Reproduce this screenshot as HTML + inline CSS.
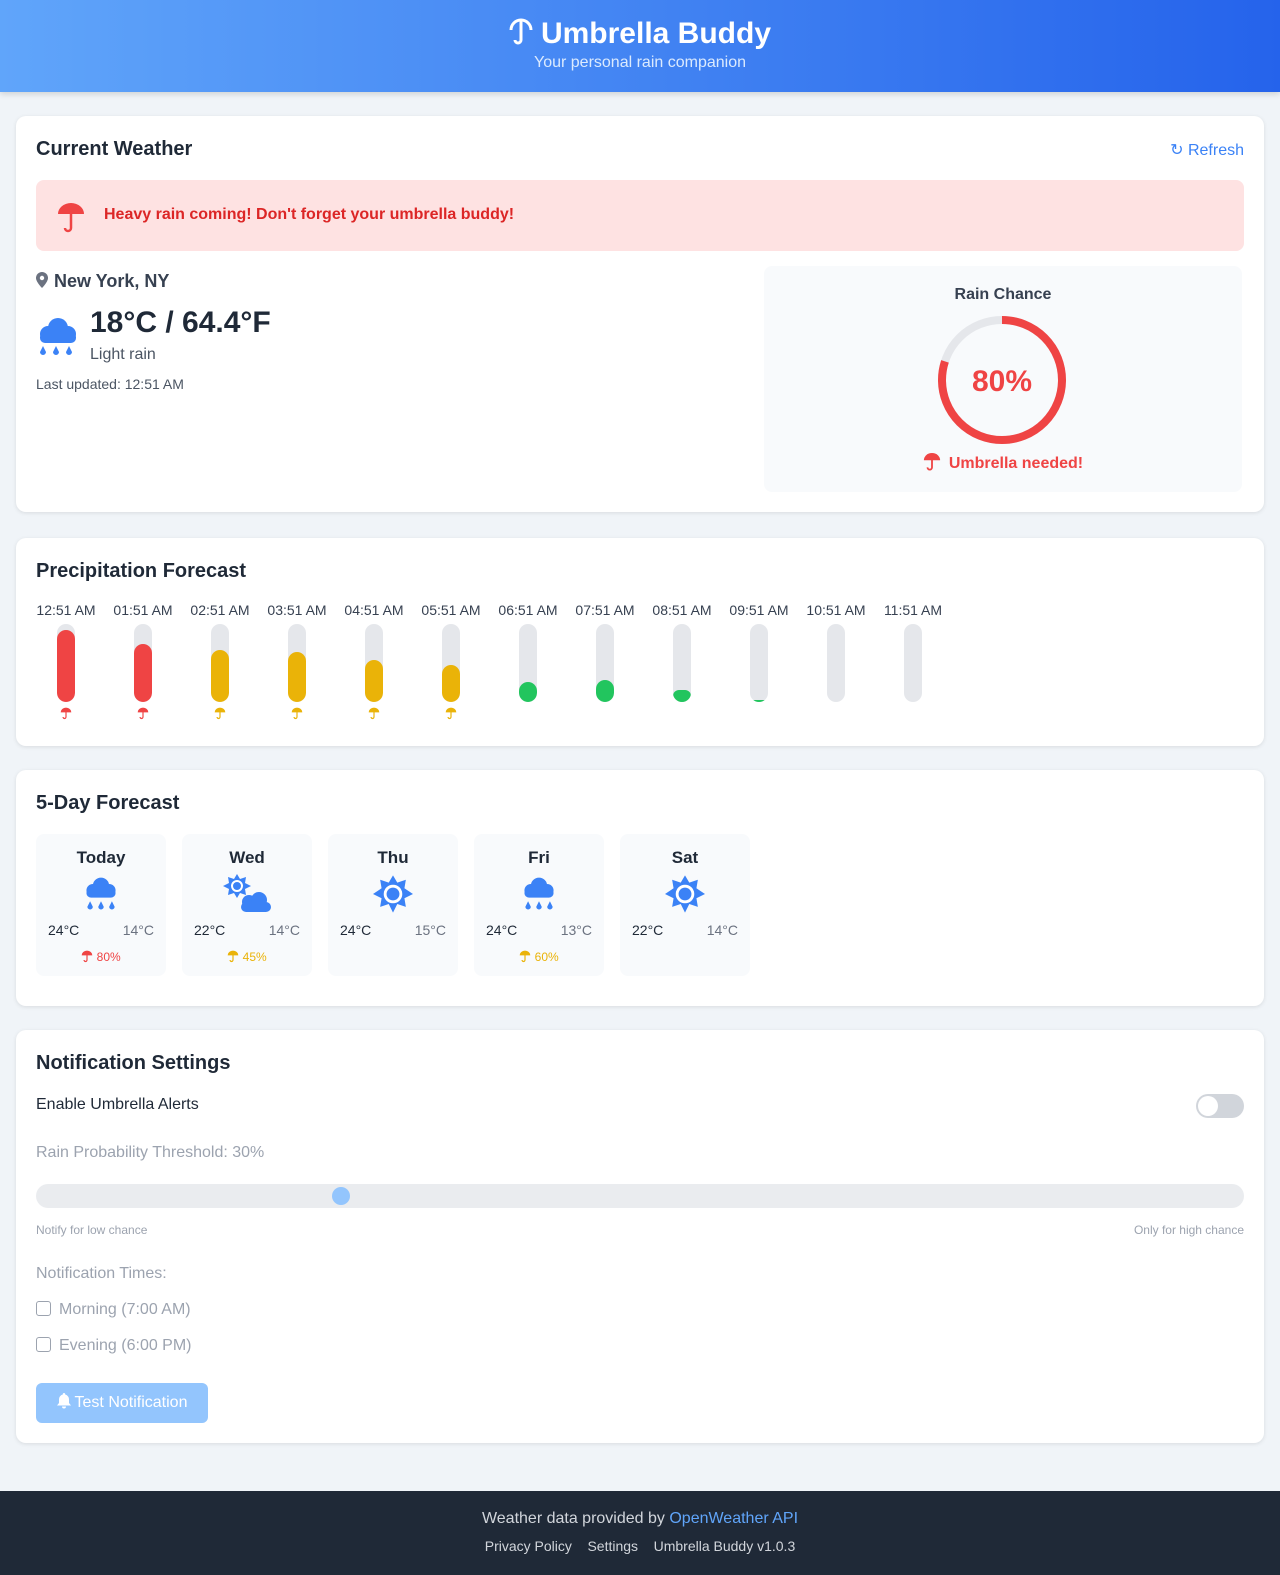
<!DOCTYPE html>
<html><head><meta charset="utf-8"><style>
*{box-sizing:border-box;margin:0;padding:0}
body{width:1280px;height:1575px;background:#f0f4f8;font-family:"Liberation Sans",sans-serif;color:#1f2937;position:relative}
header{height:92px;background:linear-gradient(90deg,#60a5fa,#2563eb);color:#fff;text-align:center;box-shadow:0 2px 6px rgba(0,0,0,.15)}
header h1{font-size:30px;font-weight:700;padding-top:16px;line-height:36px}
header p{font-size:16px;color:#dbeafe;margin-top:2px}
.card{position:absolute;left:16px;width:1248px;background:#fff;border-radius:10px;box-shadow:0 1px 4px rgba(0,0,0,.1);padding:20px}
h2{font-size:20px;font-weight:600;color:#1f2937}
.abs{position:absolute}
.fc{position:absolute;top:64px;width:130px;height:142px;background:#f8fafc;border-radius:8px;text-align:center}
.fc b{display:block;font-size:17px;font-weight:600;margin-top:14px;color:#1f2937}
.fc .t{position:absolute;top:88px;left:12px;right:12px;font-size:14px;display:flex;justify-content:space-between}
.fc .t span:last-child{color:#6b7280}
.fc .p{position:absolute;top:116px;width:100%;font-size:12px}
.col{position:absolute;top:64px;width:76px;text-align:center;font-size:14px;color:#374151}
.bar{position:relative;width:18px;height:78px;background:#e5e7eb;border-radius:9px;margin:6px auto 0;overflow:hidden}
.bar i{position:absolute;bottom:0;left:0;width:18px;border-radius:9px}
.u{display:block;margin:5px auto 0}
footer{position:absolute;top:1491px;left:0;width:1280px;height:84px;background:#1f2937;color:#d1d5db;text-align:center}
</style></head><body>
<svg width="0" height="0" style="position:absolute"><defs><symbol id="umb" viewBox="0 0 20 22"><path d="M1 9 A9 8 0 0 1 19 9 Z" fill="currentColor"/><path d="M10 3 V17 a2.5 2.5 0 0 1 -5 0" fill="none" stroke="currentColor" stroke-width="2"/></symbol></defs></svg>
<header><h1><svg width="24" height="28" viewBox="0 0 24 28" style="vertical-align:-3px;margin-right:8px"><path d="M2 12 A10 10 0 0 1 22 12" fill="none" stroke="#fff" stroke-width="3"/><path d="M12 2 V22 a3 3 0 0 1 -6 0" fill="none" stroke="#fff" stroke-width="3"/></svg>Umbrella Buddy</h1><p>Your personal rain companion</p></header>

<div class="card" style="top:116px;height:396px">
<h2 style="margin-top:2px">Current Weather</h2>
<div class="abs" style="right:20px;top:24px;color:#3b82f6;font-size:16px">&#x21bb; Refresh</div>
<div class="abs" style="left:20px;top:64px;width:1208px;height:71px;background:#fee2e2;border-radius:8px;color:#dc2626;font-size:16px;font-weight:600;padding:26px 0 0 68px">
<svg class="abs" style="left:20px;top:22px" width="30" height="32" viewBox="0 0 30 32"><path d="M2 12 A13 11 0 0 1 28 12 Z" fill="#ef4444"/><path d="M15 4 V26 a3 3 0 0 1 -6 0" fill="none" stroke="#ef4444" stroke-width="2.5"/></svg>
Heavy rain coming! Don't forget your umbrella buddy!</div>
<div class="abs" style="left:20px;top:155px;font-size:18px;color:#374151;font-weight:600"><svg width="12" height="16" viewBox="0 0 12 16" style="vertical-align:-1px;margin-right:6px"><path d="M6 0 A6 6 0 0 1 12 6 C12 10 6 16 6 16 C6 16 0 10 0 6 A6 6 0 0 1 6 0Z" fill="#6b7280"/><circle cx="6" cy="6" r="2.2" fill="#fff"/></svg>New York, NY</div>
<svg class="abs" style="left:20px;top:198px" width="42" height="44" viewBox="0 0 42 44"><circle cx="12" cy="20" r="8" fill="#3b82f6"/><circle cx="22" cy="14" r="10" fill="#3b82f6"/><circle cx="32" cy="20" r="8" fill="#3b82f6"/><rect x="4" y="18" width="36" height="11" rx="5" fill="#3b82f6"/><path d="M7 32 l-3 6 a3 3 0 0 0 6 0z M20 32 l-3 6 a3 3 0 0 0 6 0z M33 32 l-3 6 a3 3 0 0 0 6 0z" fill="#3b82f6"/></svg>
<div class="abs" style="left:74px;top:190px;font-size:30px;font-weight:700;color:#1f2937">18°C / 64.4°F</div>
<div class="abs" style="left:74px;top:230px;font-size:16px;color:#4b5563">Light rain</div>
<div class="abs" style="left:20px;top:260px;font-size:14px;color:#4b5563">Last updated: 12:51 AM</div>
<div class="abs" style="left:748px;top:150px;width:478px;height:226px;background:#f8fafc;border-radius:8px;text-align:center">
<div style="margin-top:20px;font-size:16px;color:#374151;font-weight:600">Rain Chance</div>
<svg class="abs" style="left:172px;top:48px" width="132" height="132" viewBox="0 0 132 132"><circle cx="66" cy="66" r="60" fill="none" stroke="#e5e7eb" stroke-width="8"/><circle cx="66" cy="66" r="60" fill="none" stroke="#ef4444" stroke-width="8" stroke-dasharray="301.6 377" transform="rotate(-90 66 66)"/><text x="66" y="77" text-anchor="middle" font-family="Liberation Sans" font-weight="700" font-size="30" fill="#ef4444">80%</text></svg>
<div class="abs" style="top:186px;width:100%;color:#ef4444;font-size:16px;font-weight:600"><svg width="18" height="20" style="vertical-align:-4px;margin-right:8px;color:#ef4444"><use href="#umb"/></svg>Umbrella needed!</div>
</div>
</div>

<div class="card" style="top:538px;height:208px">
<h2 style="margin-top:2px">Precipitation Forecast</h2>
<div class="col" style="left:12px">12:51 AM<div class="bar"><i style="height:72px;background:#ef4444"></i></div><svg class="u" width="12" height="13" style="color:#ef4444"><use href="#umb"/></svg></div>
<div class="col" style="left:89px">01:51 AM<div class="bar"><i style="height:58px;background:#ef4444"></i></div><svg class="u" width="12" height="13" style="color:#ef4444"><use href="#umb"/></svg></div>
<div class="col" style="left:166px">02:51 AM<div class="bar"><i style="height:52px;background:#eab308"></i></div><svg class="u" width="12" height="13" style="color:#eab308"><use href="#umb"/></svg></div>
<div class="col" style="left:243px">03:51 AM<div class="bar"><i style="height:50px;background:#eab308"></i></div><svg class="u" width="12" height="13" style="color:#eab308"><use href="#umb"/></svg></div>
<div class="col" style="left:320px">04:51 AM<div class="bar"><i style="height:42px;background:#eab308"></i></div><svg class="u" width="12" height="13" style="color:#eab308"><use href="#umb"/></svg></div>
<div class="col" style="left:397px">05:51 AM<div class="bar"><i style="height:37px;background:#eab308"></i></div><svg class="u" width="12" height="13" style="color:#eab308"><use href="#umb"/></svg></div>
<div class="col" style="left:474px">06:51 AM<div class="bar"><i style="height:20px;background:#22c55e"></i></div></div>
<div class="col" style="left:551px">07:51 AM<div class="bar"><i style="height:22px;background:#22c55e"></i></div></div>
<div class="col" style="left:628px">08:51 AM<div class="bar"><i style="height:12px;background:#22c55e"></i></div></div>
<div class="col" style="left:705px">09:51 AM<div class="bar"><i style="height:2px;background:#22c55e"></i></div></div>
<div class="col" style="left:782px">10:51 AM<div class="bar"></div></div>
<div class="col" style="left:859px">11:51 AM<div class="bar"></div></div>
</div>

<div class="card" style="top:770px;height:236px">
<h2 style="margin-top:2px">5-Day Forecast</h2>
<div class="fc" style="left:20px"><b>Today</b><svg width="40" height="40" viewBox="0 0 42 44" style="margin-top:6px"><circle cx="12" cy="18" r="7" fill="#3b82f6"/><circle cx="21" cy="13" r="9" fill="#3b82f6"/><circle cx="30" cy="18" r="7" fill="#3b82f6"/><rect x="5" y="16" width="32" height="10" rx="5" fill="#3b82f6"/><path d="M9 30 l-3 6 a3 3 0 0 0 6 0z M21 30 l-3 6 a3 3 0 0 0 6 0z M33 30 l-3 6 a3 3 0 0 0 6 0z" fill="#3b82f6"/></svg><div class="t"><span>24°C</span><span>14°C</span></div><div class="p" style="color:#ef4444"><svg width="12" height="13" style="vertical-align:-2px;color:#ef4444"><use href="#umb"/></svg> 80%</div></div>
<div class="fc" style="left:166px"><b>Wed</b><svg width="48" height="40" viewBox="0 0 48 40" style="margin-top:6px"><polygon points="14,0 17,5 23,3 22,9 28,12 22,15 23,21 17,19 14,24 11,19 5,21 6,15 0,12 6,9 5,3 11,5" fill="#3b82f6"/><circle cx="14" cy="12" r="5" fill="none" stroke="#fff" stroke-width="2"/><circle cx="26" cy="28" r="7" fill="#3b82f6"/><circle cx="36" cy="26" r="8" fill="#3b82f6"/><rect x="18" y="28" width="30" height="10" rx="5" fill="#3b82f6"/></svg><div class="t"><span>22°C</span><span>14°C</span></div><div class="p" style="color:#eab308"><svg width="12" height="13" style="vertical-align:-2px;color:#eab308"><use href="#umb"/></svg> 45%</div></div>
<div class="fc" style="left:312px"><b>Thu</b><svg width="40" height="40" viewBox="0 0 28 28" style="margin-top:6px"><polygon points="14,1 17,6 23,4 22,10 28,14 22,17 23,23 17,21 14,27 11,21 5,23 6,17 0,14 6,10 5,4 11,6" fill="#3b82f6"/><circle cx="14" cy="14" r="5.5" fill="none" stroke="#fff" stroke-width="2"/></svg><div class="t"><span>24°C</span><span>15°C</span></div></div>
<div class="fc" style="left:458px"><b>Fri</b><svg width="40" height="40" viewBox="0 0 42 44" style="margin-top:6px"><circle cx="12" cy="18" r="7" fill="#3b82f6"/><circle cx="21" cy="13" r="9" fill="#3b82f6"/><circle cx="30" cy="18" r="7" fill="#3b82f6"/><rect x="5" y="16" width="32" height="10" rx="5" fill="#3b82f6"/><path d="M9 30 l-3 6 a3 3 0 0 0 6 0z M21 30 l-3 6 a3 3 0 0 0 6 0z M33 30 l-3 6 a3 3 0 0 0 6 0z" fill="#3b82f6"/></svg><div class="t"><span>24°C</span><span>13°C</span></div><div class="p" style="color:#eab308"><svg width="12" height="13" style="vertical-align:-2px;color:#eab308"><use href="#umb"/></svg> 60%</div></div>
<div class="fc" style="left:604px"><b>Sat</b><svg width="40" height="40" viewBox="0 0 28 28" style="margin-top:6px"><polygon points="14,1 17,6 23,4 22,10 28,14 22,17 23,23 17,21 14,27 11,21 5,23 6,17 0,14 6,10 5,4 11,6" fill="#3b82f6"/><circle cx="14" cy="14" r="5.5" fill="none" stroke="#fff" stroke-width="2"/></svg><div class="t"><span>22°C</span><span>14°C</span></div></div>
</div>

<div class="card" style="top:1030px;height:413px">
<h2 style="margin-top:2px">Notification Settings</h2>
<div class="abs" style="left:20px;top:66px;font-size:16px;color:#1f2937">Enable Umbrella Alerts</div>
<div class="abs" style="right:20px;top:64px;width:48px;height:24px;background:#d1d5db;border-radius:12px"><div style="width:20px;height:20px;background:#fff;border-radius:50%;margin:2px"></div></div>
<div class="abs" style="left:20px;top:114px;font-size:16px;color:#9ca3af">Rain Probability Threshold: 30%</div>
<div class="abs" style="left:20px;top:154px;width:1208px;height:24px;background:#e5e7eb;border-radius:12px;opacity:.8"></div>
<div class="abs" style="left:316px;top:157px;width:18px;height:18px;background:#93c5fd;border-radius:50%"></div>
<div class="abs" style="left:20px;top:193px;font-size:12px;color:#9ca3af">Notify for low chance</div>
<div class="abs" style="right:20px;top:193px;font-size:12px;color:#9ca3af">Only for high chance</div>
<div class="abs" style="left:20px;top:235px;font-size:16px;color:#9ca3af">Notification Times:</div>
<div class="abs" style="left:20px;top:271px;font-size:16px;color:#9ca3af"><span style="display:inline-block;width:15px;height:15px;border:1px solid #9ca3af;border-radius:3px;vertical-align:-2px;margin-right:8px"></span>Morning (7:00 AM)</div>
<div class="abs" style="left:20px;top:307px;font-size:16px;color:#9ca3af"><span style="display:inline-block;width:15px;height:15px;border:1px solid #9ca3af;border-radius:3px;vertical-align:-2px;margin-right:8px"></span>Evening (6:00 PM)</div>
<div class="abs" style="left:20px;top:353px;width:172px;height:40px;background:#93c5fd;border-radius:6px;color:#fff;font-size:16px;text-align:center;line-height:40px"><svg width="14" height="16" viewBox="0 0 14 16" style="vertical-align:-2px;margin-right:4px"><path d="M7 0 a1.2 1.2 0 0 1 1.2 1.5 A5 5 0 0 1 12 6.5 V10 L14 12.5 H0 L2 10 V6.5 A5 5 0 0 1 5.8 1.5 A1.2 1.2 0 0 1 7 0Z M5 13.5 H9 A2 2 0 0 1 5 13.5Z" fill="#fff"/></svg>Test Notification</div>
</div>

<footer><div style="margin-top:19px;font-size:16px">Weather data provided by <span style="color:#60a5fa">OpenWeather API</span></div><div style="margin-top:10px;font-size:14px">Privacy Policy &nbsp;&nbsp; Settings &nbsp;&nbsp; Umbrella Buddy v1.0.3</div></footer>
</body></html>
